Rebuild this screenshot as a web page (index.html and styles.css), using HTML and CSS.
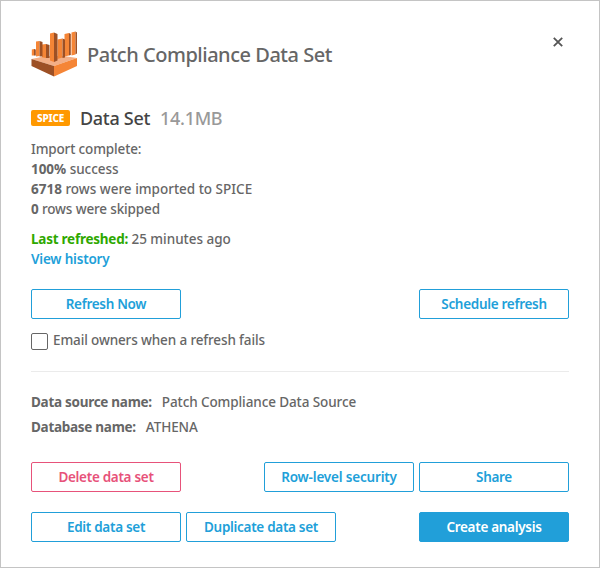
FILE: index.html
```html
<!DOCTYPE html>
<html lang="en">
<head>
<meta charset="utf-8">
<title>Patch Compliance Data Set</title>
<link rel="stylesheet" href="styles.css">
</head>
<body>
<main class="dialog">
  <header class="header">
    <svg class="logo" viewBox="0 0 46 46" aria-hidden="true">
      <path fill="#f3af87" d="M.5 28L15 25h18l13 2-23 8z"/>
      <path fill="#f58536" d="M.8 18.500l2.500-.5v6.500H.8zM5 10.500L8.500 10v15L5 25.500zM11 13.500l4-.5v14l-4-.8zM19 2.500l4-1v29.500l-4-1.500zM26.500 8.500l5-1v19l-5 1.500zM33.500 3l4.500-1v22.500l-4.500 1zM40.500 1.500l4-1v23l-4 1z"/>
      <path fill="#9d5025" d="M3 18l1.800.5v6H3zM8.500 10l3 1v14.500h-3zM15 13l3.500 1v13H15zM23 1.500l3.500 1.500v26.500L23 31zM31.500 7.500L34 8.500v18l-2.500.5zM38 2l1.800 1v21L38 24.500zM44.500.5L46 1.500v21l-1.500.7z"/>
      <path fill="#9d5025" d="M.5 28L23 35v10.500L.5 35z"/>
      <path fill="#f58536" d="M46 27l-23 8v10.500L46 35z"/>
    </svg>
    <h1 class="title">Patch Compliance Data Set</h1>
    <button class="close" aria-label="Close"><svg viewBox="0 0 10 10"><path d="M.8.8l8.400 8.400M9.200.8L.8 9.200"/></svg></button>
  </header>
  <section class="summary">
    <div class="kind"><span class="badge">SPICE</span><h2 class="kind-name">Data Set</h2><span class="size">14.1MB</span></div>
    <p class="import">Import complete:</p>
    <p class="success"><b>100%</b> success</p>
    <p class="rows"><b>6718</b> rows were imported to SPICE</p>
    <p class="skipped"><b>0</b> rows were skipped</p>
    <p class="refreshed"><b>Last refreshed:</b> 25 minutes ago</p>
    <p><a class="history">View history</a></p>
  </section>
  <div class="row refresh"><button class="btn">Refresh Now</button><button class="btn push">Schedule refresh</button></div>
  <label class="notify"><span class="box"></span><span class="notify-text">Email owners when a refresh fails</span></label>
  <dl class="source">
    <div class="pair"><dt>Data source name:</dt><dd>Patch Compliance Data Source</dd></div>
    <div class="pair"><dt>Database name:</dt><dd>ATHENA</dd></div>
  </dl>
  <div class="row"><button class="btn danger">Delete data set</button><button class="btn push wide">Row-level security</button><button class="btn">Share</button></div>
  <div class="row last"><button class="btn">Edit data set</button><button class="btn">Duplicate data set</button><button class="btn primary push">Create analysis</button></div>
</main>
</body>
</html>
```
FILE: styles.css
```css
* { box-sizing: border-box; margin: 0; }
body {
  font: 500 13.5px/20px "Noto Sans", "Open Sans", sans-serif;
  letter-spacing: -0.3px;
  color: #666;
}
b, dt { font-weight: 700; }
.dialog {
  height: 568px;
  padding: 29px 30px 0;
  border: 1px solid #c4c4c4;
  background: #fff;
}
.header { display: flex; height: 48px; }
.logo { width: 46px; height: 46px; margin-top: 1px; }
.title { margin: 10px 0 0 10px; font-size: 20px; font-weight: 500; line-height: 30px; letter-spacing: -0.48px; }
.close { width: 12px; height: 12px; margin: 6px 5px 0 auto; padding: 1px; border: 0; background: none; }
.close svg { display: block; width: 10px; height: 10px; fill: none; stroke: #555; stroke-width: 1.8; }
.kind { display: flex; align-items: center; height: 24px; margin: 28px 0 9px; }
.badge { width: 39px; height: 16px; border-radius: 2px; background: #f90; color: #fff; font-size: 10px; font-weight: 800; line-height: 16px; letter-spacing: -0.2px; text-align: center; }
.kind-name { margin-left: 10px; font-size: 18px; font-weight: 500; color: #444; }
.size { margin-left: 10px; font-size: 18px; color: #999; }
.import, .skipped { letter-spacing: -0.14px; }
.success { letter-spacing: -0.04px; }
.rows { letter-spacing: 0; }
.refreshed { margin-top: 10px; letter-spacing: -0.03px; }
.refreshed b { color: #2ea800; letter-spacing: -0.24px; }
.history { color: #219fd9; font-weight: 600; letter-spacing: -0.2px; }
.row { display: flex; gap: 5px; }
.refresh { margin-top: 20px; }
.btn { width: 150px; height: 30px; padding: 0; border: 1px solid #219fd9; border-radius: 2px; background: #fff; color: #219fd9; font: inherit; font-weight: 600; letter-spacing: inherit; }
.wide { letter-spacing: -0.18px; }
.push { margin-left: auto; }
.danger { border-color: #e7527a; color: #e7527a; }
.primary { background: #219fd9; color: #fff; }
.notify { display: flex; height: 53px; padding-top: 11px; border-bottom: 1px solid #ebebeb; letter-spacing: -0.13px; }
.box { width: 17px; height: 17px; margin: 3px 5px 0 0; border: 1px solid #666; border-radius: 2px; }
.source { padding: 20px 0; }
.pair { display: flex; gap: 10px; height: 25px; }
dt { letter-spacing: -0.28px; }
dd { margin-left: 0; font-weight: 500; letter-spacing: -0.1px; }
.last { margin-top: 20px; }
```
